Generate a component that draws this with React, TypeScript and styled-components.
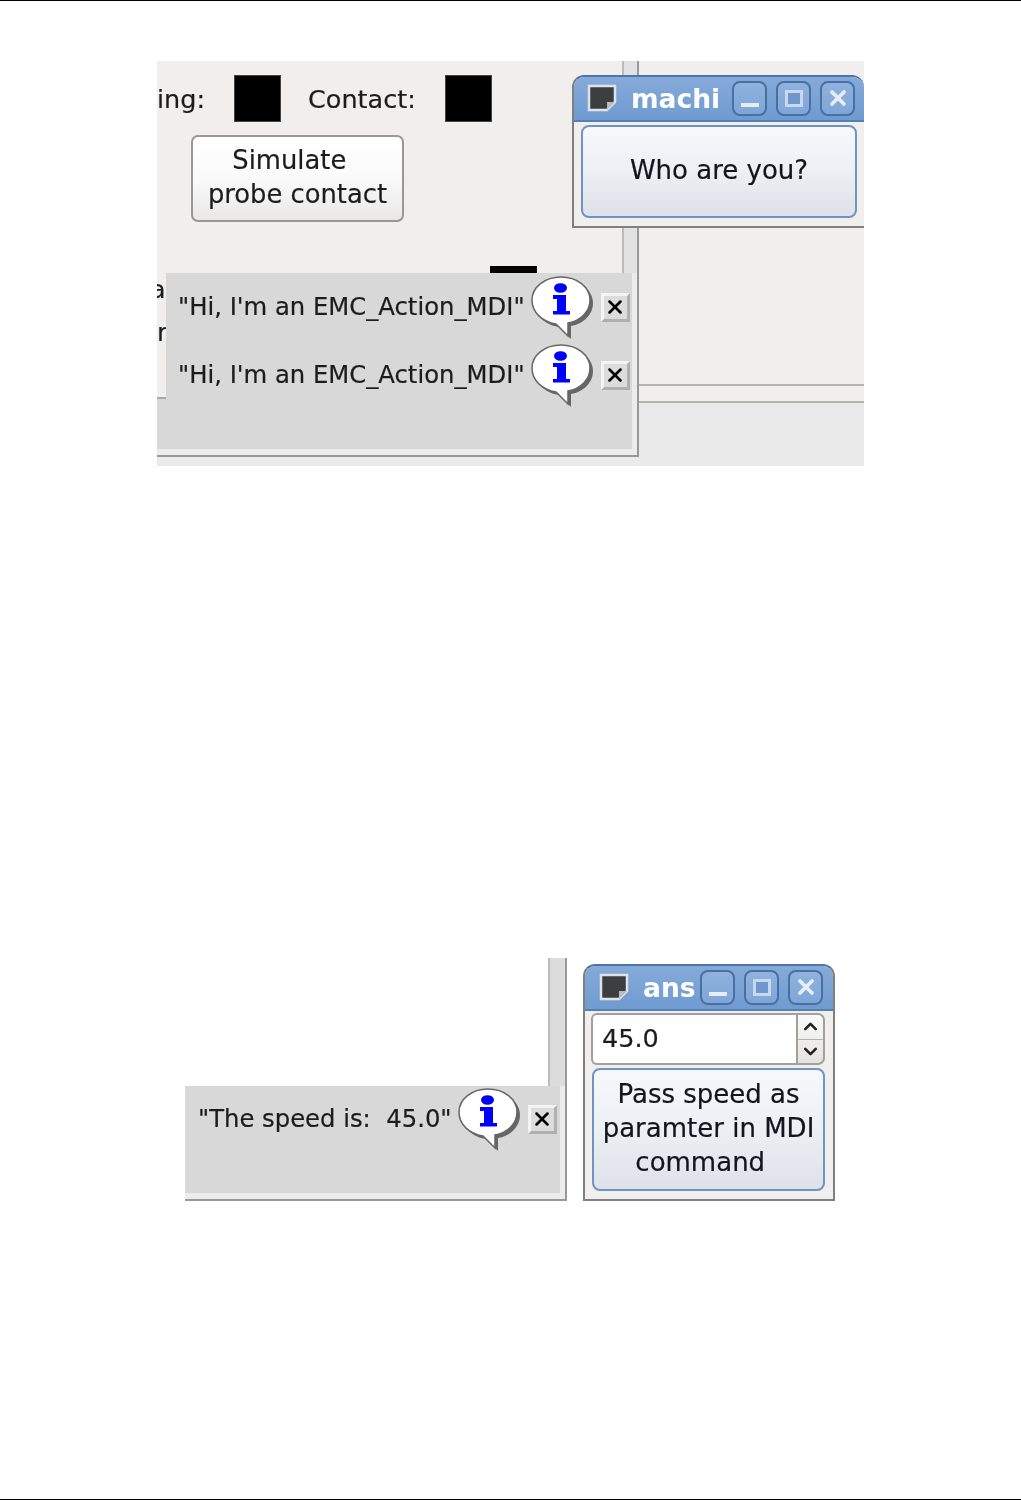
import React from 'react';
import styled, { createGlobalStyle } from 'styled-components';
import { ChevronDown, ChevronUp, X } from 'lucide-react';

const GlobalStyle = createGlobalStyle`
  html, body {
    margin: 0;
    background: #fff;
  }
`;

const Page = styled.div`
  height: 1500px;
  box-sizing: border-box;
  border-top: 1px solid #000;
  border-bottom: 1px solid #000;
  font-family: "DejaVu Sans", sans-serif;
  color: #1c1c1c;
  -webkit-text-stroke: 0.2px currentColor;
`;

// each screenshot is a free canvas of overlapping desktop windows
const Shot = styled.div<{ $left: number; $top: number; $w: number; $h: number; $bg: string }>`
  position: relative;
  overflow: hidden;
  box-sizing: border-box;
  margin-left: ${p => p.$left}px;
  margin-top: ${p => p.$top}px;
  width: ${p => p.$w}px;
  height: ${p => p.$h}px;
  background: ${p => p.$bg};
  filter: blur(0.4px);
`;

const ProbeRow = styled.div`
  display: flex;
  align-items: center;
  padding: 14px 0 0 0;
  font-size: 25.5px;
`;

const Swatch = styled.span`
  width: 47px;
  height: 47px;
  box-sizing: border-box;
  background: #000;
  border: 1px solid #444;
  margin: 0 27px 0 29px;
`;

const SimulateButton = styled.div`
  width: 213px;
  height: 87px;
  box-sizing: border-box;
  margin: 13px 0 0 34px;
  padding-bottom: 3px;
  display: flex;
  align-items: center;
  justify-content: center;
  text-align: center;
  white-space: pre;
  font-size: 25.8px;
  line-height: 34px;
  border: 2px solid #9a9794;
  border-radius: 7px;
  background: linear-gradient(#ffffff, #fafafa 50%, #e8e8e8);
`;

const VerticalStrip = styled.div<{ $left: number; $w: number; $h: number; $fill: string }>`
  position: absolute;
  top: 0;
  left: ${p => p.$left}px;
  width: ${p => p.$w}px;
  height: ${p => p.$h}px;
  box-sizing: border-box;
  background: ${p => p.$fill};
  border-left: 2px solid #bbb;
  border-right: 2px solid #999;
`;

const LowerFloor = styled.div`
  position: absolute;
  left: 0;
  right: 0;
  top: 323px;
  height: 82px;
  background: #ebeaea;
`;

const RightBand = styled.div`
  position: absolute;
  left: 482px;
  right: 0;
  top: 323px;
  height: 19px;
  box-sizing: border-box;
  background: #f0efee;
  border-top: 2px solid #b5b3b0;
  border-bottom: 2px solid #b5b3b0;
`;

const BlackBar = styled.div`
  position: absolute;
  left: 333px;
  top: 205px;
  width: 47px;
  height: 7px;
  background: #000;
`;

const Frame = styled.div<{ $left: number; $top: number; $w: number; $h: number }>`
  position: absolute;
  left: ${p => p.$left}px;
  top: ${p => p.$top}px;
  width: ${p => p.$w}px;
  height: ${p => p.$h}px;
  box-sizing: border-box;
  padding: 0 5px 6px 0;
  background: #ececec;
  border-right: 2px solid #999;
  border-bottom: 2px solid #999;
`;

const MessagePanel = styled.div<{ $pad: number }>`
  height: 100%;
  box-sizing: border-box;
  padding-left: ${p => p.$pad}px;
  background: #d8d8d8;
`;

const MessageRow = styled.div<{ $h: number }>`
  display: flex;
  align-items: center;
  height: ${p => p.$h}px;
`;

const MessageText = styled.span`
  font-size: 24.3px;
  white-space: pre;
  margin: 0 6px 2px 0;
`;

const Bubble = styled.svg`
  width: 64px;
  height: 64px;
  flex: none;
  margin-top: 1px;
`;

const DismissButton = styled.div`
  width: 29px;
  height: 29px;
  flex: none;
  margin-left: 6px;
  box-sizing: border-box;
  display: flex;
  align-items: center;
  justify-content: center;
  color: #000;
  background: #dcdcdc;
  border: 3px solid;
  border-color: #f4f4f4 #b0b0b0 #b0b0b0 #f4f4f4;
`;

const LeftCover = styled.div`
  position: absolute;
  left: 0;
  top: 212px;
  width: 9px;
  height: 126px;
  box-sizing: border-box;
  overflow: hidden;
  background: #f0efee;
  border-bottom: 2px solid #aaa;
  font-size: 25.5px;
  padding-top: 1px;
`;

const ClippedLetter = styled.div<{ $shift: number }>`
  height: 43px;
  line-height: 30px;
  margin-left: ${p => p.$shift}px;
`;

const Window = styled.div<{ $left: number; $top: number; $w: number; $h: number; $open?: boolean }>`
  position: absolute;
  left: ${p => p.$left}px;
  top: ${p => p.$top}px;
  width: ${p => p.$w}px;
  height: ${p => p.$h}px;
  box-sizing: border-box;
  display: flex;
  flex-direction: column;
  background: #f0efee;
  border: 2px solid #808080;
  border-top-color: #4d76a8;
  border-radius: 12px 12px 0 0;
  ${p => p.$open && 'border-right: none;'}
  overflow: hidden;
`;

const TitleBar = styled.div<{ $indent: number; $end: number }>`
  height: 45px;
  flex: none;
  display: flex;
  align-items: center;
  box-sizing: border-box;
  padding: 0 ${p => p.$end}px 1px ${p => p.$indent}px;
  background: linear-gradient(#86aad9, #6f9bd0);
  border-bottom: 2px solid #5580b5;
`;

const WindowIcon = styled.svg`
  width: 30px;
  height: 28px;
  flex: none;
  margin-right: 14px;
`;

const TitleText = styled.span<{ $gap: number }>`
  flex: 1;
  min-width: 0;
  overflow: hidden;
  margin-right: ${p => p.$gap}px;
  color: #fff;
  font-size: 26.5px;
  font-weight: bold;
  white-space: nowrap;
  -webkit-text-stroke: 0;
`;

const TitleButton = styled.div`
  width: 35px;
  height: 35px;
  flex: none;
  box-sizing: border-box;
  display: flex;
  align-items: center;
  justify-content: center;
  margin-left: 9px;
  border: 2px solid #4a70a2;
  border-radius: 8px;
  background: linear-gradient(#8fb2de, #7ea6d8);
  color: #e6edf6;
  &:first-of-type {
    margin-left: 0;
  }
`;

const MinimizeBar = styled.span`
  width: 18px;
  height: 4px;
  margin-top: 13px;
  background: currentColor;
`;

const MaximizeBox = styled.span`
  width: 18px;
  height: 17px;
  box-sizing: border-box;
  border: 3px solid #c9d8ec;
  background: #6f97cb;
`;

const WindowBody = styled.div<{ $pad: string; $gap?: number }>`
  flex: 1;
  min-height: 0;
  display: flex;
  flex-direction: column;
  gap: ${p => p.$gap ?? 0}px;
  padding: ${p => p.$pad};
`;

const ActionButton = styled.div`
  flex: 1;
  display: flex;
  align-items: center;
  justify-content: center;
  text-align: center;
  white-space: pre;
  font-size: 26px;
  line-height: 34px;
  color: #14141c;
  box-sizing: border-box;
  padding-bottom: 3px;
  border: 2px solid #6e94c4;
  border-radius: 8px;
  background: linear-gradient(#f6f8fc, #eceff4 50%, #dee1e7);
`;

const SpinRow = styled.div`
  display: flex;
  height: 52px;
  flex: none;
  margin-left: -1px;
`;

const SpinField = styled.div`
  flex: 1;
  display: flex;
  align-items: center;
  box-sizing: border-box;
  padding: 0 0 3px 9px;
  font-size: 25.5px;
  background: #fff;
  border: 2px solid #a3a09c;
  border-right: none;
  border-radius: 6px 0 0 6px;
`;

const SpinArrows = styled.div`
  width: 29px;
  box-sizing: border-box;
  display: flex;
  flex-direction: column;
  border: 2px solid #a3a09c;
  border-radius: 0 7px 7px 0;
  background: linear-gradient(#fafafa, #e4e3e1);
  color: #222;
`;

const SpinArrow = styled.div`
  flex: 1;
  display: flex;
  align-items: center;
  justify-content: center;
  & + & {
    border-top: 1px solid #b5b3b0;
  }
`;

const bubblePath =
  'M30 1C46 1 59 11 59 24C59 36 49 45 37 47L37 60L25 48C12 46 1 37 1 24C1 11 14 1 30 1Z';

function InfoBubble() {
  return (
    <Bubble viewBox="0 0 64 64">
      <path d={bubblePath} transform="translate(3 3)" fill="#666" />
      <path d={bubblePath} fill="#fff" stroke="#666" strokeWidth="1.5" />
      <ellipse cx="29.5" cy="12" rx="6.5" ry="4.8" fill="#00f" />
      <path d="M22 19H35V35H39V38.5H22V35H26V23H22Z" fill="#00f" />
    </Bubble>
  );
}

function Message({ text, height }: { text: string; height: number }) {
  return (
    <MessageRow $h={height}>
      <MessageText>{text}</MessageText>
      <InfoBubble />
      <DismissButton>
        <X size={22} strokeWidth={2.8} />
      </DismissButton>
    </MessageRow>
  );
}

function TitleBarRow({ title, indent, end, gap }: { title: string; indent: number; end: number; gap: number }) {
  return (
    <TitleBar $indent={indent} $end={end}>
      <WindowIcon viewBox="0 0 30 28">
        <path d="M2 2H28V18L20 26H2Z" fill="#3c3f40" stroke="#dfe3e6" strokeWidth="2.5" />
        <path d="M20 26V18H28Z" fill="#b9bcbe" />
      </WindowIcon>
      <TitleText $gap={gap}>{title}</TitleText>
      <TitleButton>
        <MinimizeBar />
      </TitleButton>
      <TitleButton>
        <MaximizeBox />
      </TitleButton>
      <TitleButton>
        <X size={24} strokeWidth={3.8} />
      </TitleButton>
    </TitleBar>
  );
}

function App() {
  return (
    <>
      <GlobalStyle />
      <Page>
        <Shot $left={157} $top={60} $w={707} $h={405} $bg="#f0efee">
          <LowerFloor />
          <VerticalStrip $left={465} $w={17} $h={323} $fill="#e2e2e2" />
          <RightBand />
          <ProbeRow>
            ing:
            <Swatch />
            Contact:
            <Swatch />
          </ProbeRow>
          <SimulateButton>{'Simulate  \nprobe contact'}</SimulateButton>
          <BlackBar />
          <Frame $left={0} $top={212} $w={482} $h={184}>
            <MessagePanel $pad={21}>
              <Message text={'"Hi, I\'m an EMC_Action_MDI"'} height={68} />
              <Message text={'"Hi, I\'m an EMC_Action_MDI"'} height={68} />
            </MessagePanel>
          </Frame>
          <LeftCover>
            <ClippedLetter $shift={-7}>a</ClippedLetter>
            <ClippedLetter $shift={0}>r</ClippedLetter>
          </LeftCover>
          <Window $left={415} $top={14} $w={292} $h={153} $open>
            <TitleBarRow title="machine" indent={13} end={9} gap={10} />
            <WindowBody $pad="3px 7px 8px 7px">
              <ActionButton>Who are you?</ActionButton>
            </WindowBody>
          </Window>
        </Shot>
        <Shot $left={185} $top={492} $w={651} $h={243} $bg="#fff">
          <VerticalStrip $left={363} $w={19} $h={243} $fill="#dcdcdc" />
          <Frame $left={0} $top={128} $w={382} $h={115}>
            <MessagePanel $pad={13}>
              <Message text={'"The speed is:  45.0"'} height={66} />
            </MessagePanel>
          </Frame>
          <Window $left={398} $top={6} $w={252} $h={237}>
            <TitleBarRow title="ans" indent={14} end={10} gap={5} />
            <WindowBody $pad="2px 8px 8px 7px" $gap={3}>
              <SpinRow>
                <SpinField>45.0</SpinField>
                <SpinArrows>
                  <SpinArrow>
                    <ChevronUp size={21} strokeWidth={3} />
                  </SpinArrow>
                  <SpinArrow>
                    <ChevronDown size={21} strokeWidth={3} />
                  </SpinArrow>
                </SpinArrows>
              </SpinRow>
              <ActionButton>{'Pass speed as\nparamter in MDI\ncommand  '}</ActionButton>
            </WindowBody>
          </Window>
        </Shot>
      </Page>
    </>
  );
}

export default App;
